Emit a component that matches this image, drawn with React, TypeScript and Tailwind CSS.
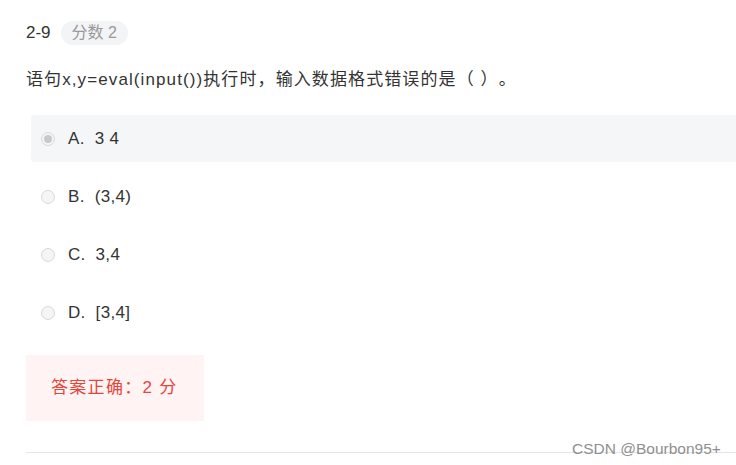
import React from 'react';

const options = [
  { key: 'A', text: '3 4', checked: true },
  { key: 'B', text: '(3,4)', checked: false },
  { key: 'C', text: '3,4', checked: false },
  { key: 'D', text: '[3,4]', checked: false },
];

const font = { fontFamily: '"Liberation Sans", "Noto Sans CJK SC", sans-serif' };

function Radio({ checked }: { checked: boolean }) {
  return (
    <span className="flex h-[14px] w-[14px] items-center justify-center rounded-full border border-[#d9d9d9] bg-[#f5f5f5]">
      {checked && <span className="h-[8px] w-[8px] rounded-full bg-[#c9c9c9]" />}
    </span>
  );
}

export default function App() {
  return (
    <div className="relative h-[465px] w-[736px] overflow-hidden bg-white" style={font}>
      <div className="pl-[26px] pt-[21px]">
        {/* Header */}
        <div className="flex items-center gap-[10px]">
          <span className="text-[17px] leading-[24px] text-[#333]">2-9</span>
          <span className="rounded-full bg-[#f3f4f6] px-[11px] text-[16px] leading-[24px] text-[#999]">
            分数 2
          </span>
        </div>

        {/* Question */}
        <p className="mt-[22px] text-[17px] leading-[26px] tracking-[1.1px] text-[#333] [text-spacing-trim:space-all]">
          语句x,y=eval(input())执行时，输入数据格式错误的是（ ）。
        </p>

        {/* Options */}
        <div className="mt-[22px] flex flex-col gap-[11px] pl-[5px]">
          {options.map((o) => (
            <div
              key={o.key}
              className={`flex h-[47px] items-center gap-[13px] rounded-l-[4px] pl-[10px] ${
                o.checked ? 'bg-[#f5f6f8]' : ''
              }`}
            >
              <Radio checked={o.checked} />
              <span className="flex gap-[10px] text-[17px] tracking-[0.3px] text-[#333]">
                <span>{o.key}.</span>
                <span>{o.text}</span>
              </span>
            </div>
          ))}
        </div>

        {/* Result */}
        <div className="mt-[19px] flex h-[66px] w-[178px] items-center bg-[#fff4f3] pl-[25px]">
          <span className="text-[17px] tracking-[1.3px] text-[#e4463c]">答案正确：2 分</span>
        </div>

        <div className="mt-[31px] h-px bg-[#e5e5e5]" />
      </div>

      <span
        className="absolute left-[572px] top-[440px] text-[15.5px] leading-[18px] text-[#8f8f8f]"
        style={{ fontFamily: '"Liberation Sans", Arial, sans-serif' }}
      >
        CSDN @Bourbon95+
      </span>
    </div>
  );
}
